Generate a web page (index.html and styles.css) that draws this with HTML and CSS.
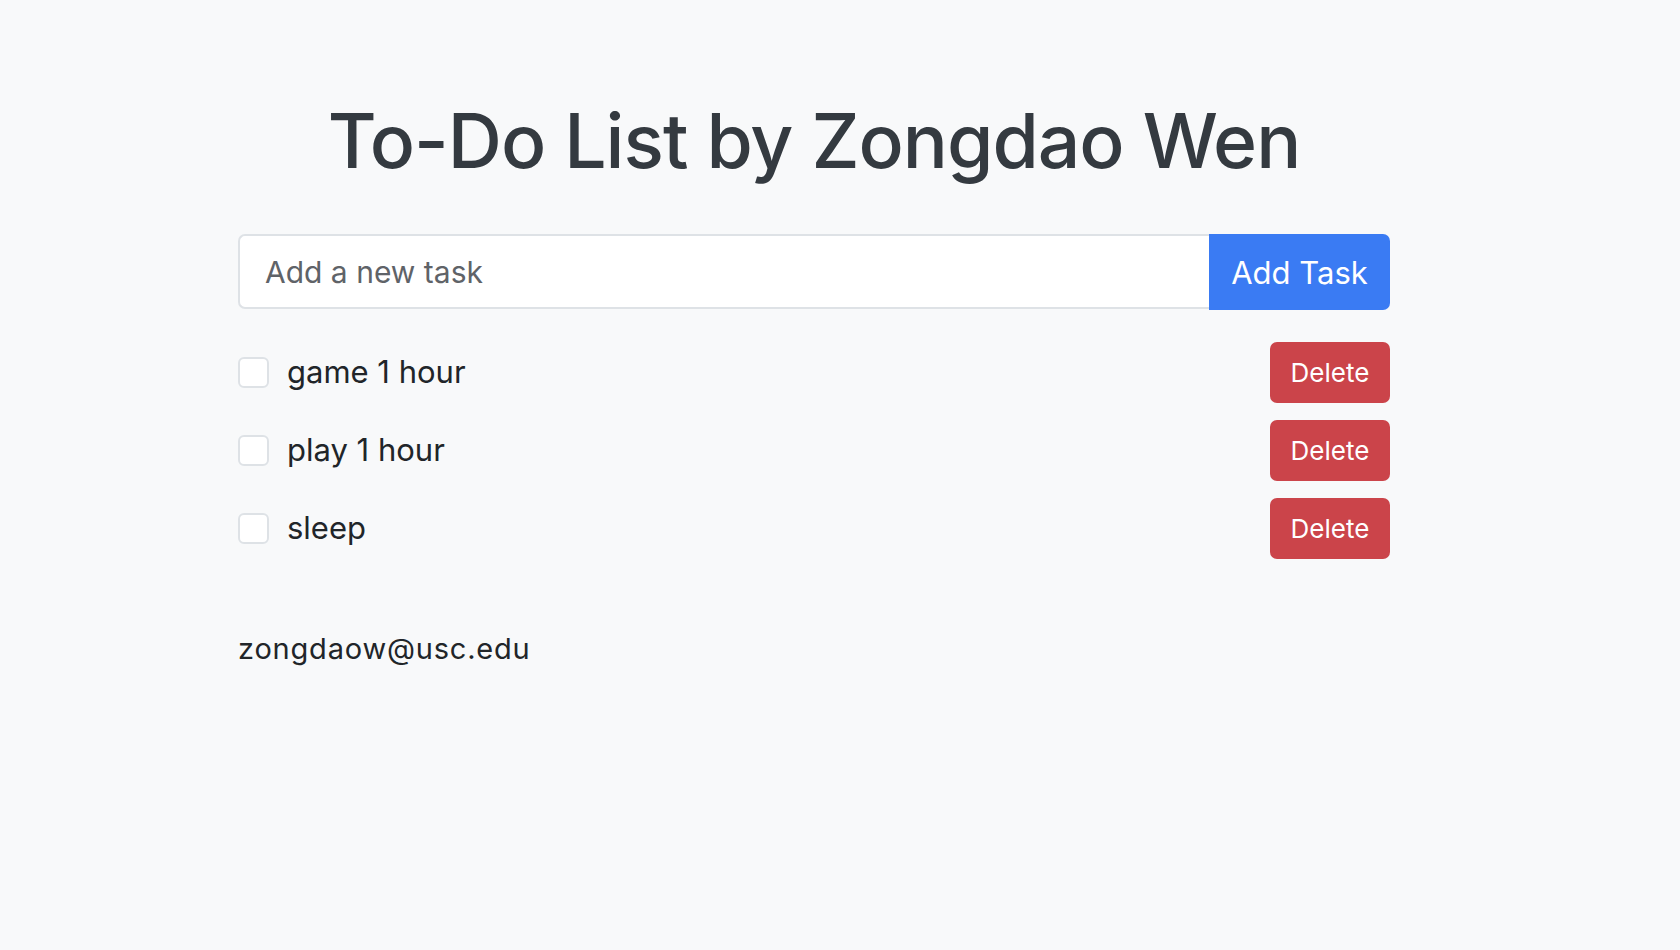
FILE: index.html
```html
<!DOCTYPE html>
<html lang="en">
<head>
<meta charset="utf-8">
<title>To-Do List</title>
<link rel="stylesheet" href="styles.css">
</head>
<body>
<div class="page">
  <main class="container">
    <h1 class="title">To-Do List by Zongdao Wen</h1>
    <form class="input-group" onsubmit="return false">
      <input class="task-input" type="text" placeholder="Add a new task">
      <button class="btn btn-add" type="submit">Add Task</button>
    </form>
    <ul class="task-list">
      <li class="task">
        <label class="task-label"><input class="check" type="checkbox"><span>game 1 hour</span></label>
        <button class="btn btn-delete" type="button">Delete</button>
      </li>
      <li class="task">
        <label class="task-label"><input class="check" type="checkbox"><span>play 1 hour</span></label>
        <button class="btn btn-delete" type="button">Delete</button>
      </li>
      <li class="task">
        <label class="task-label"><input class="check" type="checkbox"><span>sleep</span></label>
        <button class="btn btn-delete" type="button">Delete</button>
      </li>
    </ul>
    <footer class="footer">zongdaow@usc.edu</footer>
  </main>
</div>
</body>
</html>
```
FILE: styles.css
```css
* { box-sizing: border-box; }
html, body {
  margin: 0;
  background: #f8f9fa;
  font-family: Inter, "Noto Sans", sans-serif;
  color: #212529;
}
.page {
  padding: 96px 52px 0 0;
}
.container {
  width: 1152px;
  margin: 0 auto;
  display: flex;
  flex-direction: column;
}
.title {
  margin: 0;
  text-align: center;
  font-size: 75px;
  font-weight: 500;
  line-height: 1.2;
  color: #343a40;
  letter-spacing: -1px;
}
.input-group {
  display: flex;
  margin: 48px 0 0;
  height: 76px;
}
.task-input {
  flex: 1;
  min-width: 0;
  height: 75px;
  border: 2px solid #dee2e6;
  border-right: none;
  border-radius: 7px 0 0 7px;
  background: #fff;
  padding: 0 25px;
  font-family: inherit;
  font-size: 30px;
  color: #212529;
  outline: none;
}
.task-input::placeholder { color: #5f6368; }
.btn {
  border: none;
  font-family: inherit;
  color: #fff;
  cursor: pointer;
}
.btn-add {
  width: 181px;
  height: 76px;
  background: #3a7bf3;
  border-radius: 0 7px 7px 0;
  font-size: 31px;
}
.task-list {
  list-style: none;
  margin: 32px 0 0;
  padding: 0;
  display: flex;
  flex-direction: column;
  gap: 17px;
}
.task {
  display: flex;
  align-items: center;
  justify-content: space-between;
  height: 61px;
}
.task-label {
  display: flex;
  align-items: center;
  gap: 18px;
  font-size: 31px;
  line-height: 1.5;
}
.check {
  appearance: none;
  -webkit-appearance: none;
  margin: 0;
  width: 31px;
  height: 31px;
  border: 2px solid #dee2e6;
  border-radius: 6px;
  background: #fff;
}
.btn-delete {
  width: 120px;
  height: 61px;
  background: #cb444a;
  border-radius: 7px;
  font-size: 26px;
}
.footer {
  margin-top: 68px;
  font-size: 29px;
  line-height: 1.5;
  letter-spacing: 0.8px;
}
```
